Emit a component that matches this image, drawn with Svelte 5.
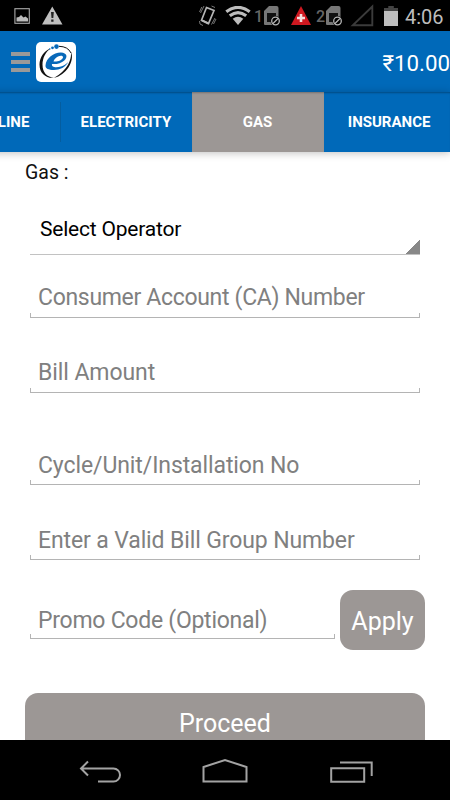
<script lang="ts">
  type Field = { id: string; hint: string; gap: number; tracking: number };

  const tabs = ["LANDLINE", "ELECTRICITY", "GAS", "INSURANCE"];

  const fields: Field[] = [
    { id: "account", hint: "Consumer Account (CA) Number", gap: 15, tracking: -0.32 },
    { id: "amount", hint: "Bill Amount", gap: 27, tracking: -0.08 },
    { id: "cycle", hint: "Cycle/Unit/Installation No", gap: 44, tracking: -0.1 },
    { id: "group", hint: "Enter a Valid Bill Group Number", gap: 27, tracking: -0.12 },
  ];

  let active = $state("GAS");
  let values: Record<string, string> = $state({
    account: "",
    amount: "",
    cycle: "",
    group: "",
  });
  let promo = $state("");
</script>

{#snippet sim(slot: string)}
  <span class="slot">{slot}</span>
  <svg class="sim" width="17" height="20" viewBox="0 0 17 20">
    <path d="M5 0h7.500q2 0 2 2v16q0 1-1 1H1q-1 0-1-1V5z" fill="#777" />
    <path d="M3 7h9v9H3z" fill="#111" />
    <circle cx="11.500" cy="15" r="5" fill="#000" />
    <circle cx="11.500" cy="15" r="3.800" fill="none" stroke="#b5b5b5" stroke-width="1.300" />
    <path d="M9 17.500l5-5" stroke="#b5b5b5" stroke-width="1.300" />
  </svg>
{/snippet}

<div class="screen">
  <div class="status">
    <svg width="70" height="31" viewBox="0 0 70 31">
      <rect x="14.900" y="8.700" width="14.400" height="14.600" fill="none" stroke="#aaa" stroke-width="1.100" />
      <path d="M16.500 21.500v-4l2.500-.5 2-2 2.500 2.500 2-1 2.500 2v3z" fill="#bbb" />
      <path d="M52.300 6.500L62.500 24.500H42z" fill="#bfbfbf" />
      <path d="M51 12h2.800l-.5 6h-1.800zM51.200 19.500h2.300v2.200h-2.300z" fill="#222" />
    </svg>
    <div class="indicators">
      <svg class="rotate" width="20" height="22" viewBox="0 0 20 22">
        <path d="M8.500 2.500l7.500 3-5.500 13-7-3.300z" fill="none" stroke="#b5b5b5" stroke-width="1.700" />
        <path d="M4.500 14.500l6.300 3-.7 2-6.500-3.300z" fill="#b5b5b5" />
        <path d="M6 1L2.500 8M3.800 2L1.500 7M17 13l-3.500 6.500M18 14l-2.500 5M1.500 16l.5 3 3 1.500M13.500 1l3.500 1.500" fill="none" stroke="#777" stroke-width="1" />
      </svg>
      <svg class="wifi" width="26" height="20" viewBox="0 0 26 20">
        <path d="M1.300 5.800Q13-3 24.700 5.800" fill="none" stroke="#bdbdbd" stroke-width="3.200" />
        <path d="M4.800 9.800Q13 3.400 21.200 9.800" fill="none" stroke="#bdbdbd" stroke-width="3.200" />
        <path d="M7.700 12.700Q13 8.700 18.300 12.700L13 19z" fill="#bdbdbd" />
      </svg>
      {@render sim("1")}
      <svg class="alert" width="22" height="20" viewBox="0 0 22 20">
        <path d="M11 0L21 19H1z" fill="#cf1820" />
        <path d="M9.700 8h2.600v2.700H15v2.600h-2.700V16H9.700v-2.700H7v-2.600h2.700z" fill="#f4dede" />
      </svg>
      {@render sim("2")}
      <svg class="signal" width="24" height="23" viewBox="0 0 24 23">
        <path d="M22.300 2.500v18.700H2.800z" fill="none" stroke="#3b3b3b" stroke-width="1.900" />
      </svg>
      <svg class="battery" width="14" height="20" viewBox="0 0 14 20">
        <path d="M4.300 0h5.500v2H14v3H0V2h4.300z" fill="#444" />
        <path d="M0 5h14v15H0z" fill="#bebebe" />
      </svg>
      <span class="clock">4:06</span>
    </div>
  </div>

  <header>
    <button class="menu" aria-label="Menu"><i></i><i></i><i></i></button>
    <svg class="logo" width="40" height="40" viewBox="0 0 40 40">
      <rect width="40" height="40" rx="5" fill="#fff" />
      <path d="M14.500 6.500C8 9 3.500 15.500 3.500 22.500c0 9 6.500 14 14.500 13.300-7-.5-11.500-5.500-11.500-13C6.500 16 9.500 10 14.500 6.500z" fill="#111" />
      <path d="M23 4.300q9 .2 12 6.700" fill="none" stroke="#111" stroke-width="1" />
      <path d="M35 10c4 9-5 23.500-17 25.800 8-4 18-13.800 17-25.800z" fill="#111" />
      <path d="M9.500 23.500C10 16 18 10.300 25 10.500c6 .3 7 4.500 3.300 8-3 2.800-8 4-12.300 3.500-1 4 5.500 3.500 9 2.500 3-.9 5-2.200 7.300-4.500-2.500 5-8.500 8-14.300 8-5.500 0-8.800-1.500-8.500-4.500zM17.500 19.500c4 .5 9-1.500 9.500-4 .3-2-2.500-2.200-5-1-2.300 1.100-4 3-4.500 5z" fill="#0869b9" />
      <circle cx="20.500" cy="4.600" r="2.300" fill="#0869b9" />
      <circle cx="16.500" cy="5.800" r="1.400" fill="#0869b9" />
      <circle cx="13.700" cy="7" r=".8" fill="#0869b9" />
    </svg>
    <span class="balance">₹10.00</span>
  </header>

  <nav class="tabs">
    {#each tabs as tab (tab)}
      <button class="tab" class:active={tab === active} onclick={() => (active = tab)}>
        {tab}
      </button>
    {/each}
  </nav>

  <main>
    <div class="title">Gas :</div>
    <button class="spinner">Select Operator</button>

    {#each fields as f (f.id)}
      <div class="field" style:margin-top="{f.gap}px" style:letter-spacing="{f.tracking}px">
        <input placeholder={f.hint} aria-label={f.hint} bind:value={values[f.id]} />
      </div>
    {/each}

    <div class="promo">
      <div class="field">
        <input placeholder="Promo Code (Optional)" aria-label="Promo code" bind:value={promo} />
      </div>
      <button class="apply">Apply</button>
    </div>
    <button class="proceed">Proceed</button>
  </main>

  <footer>
    <svg width="450" height="60" viewBox="0 0 450 60" fill="none" stroke="#a3a3a3" stroke-width="2">
      <path d="M80.500 28.500h33a6.500 6.500 0 0 1 0 13H98M88 21.500l-7 7 7 7" />
      <path d="M203.500 41.500V27L225 20l21.500 7v14.500z" />
      <path d="M331.200 28.200h33v13.600h-33zM340 22.500h31.700V36" />
    </svg>
  </footer>
</div>

<style>
  :global(body) {
    margin: 0;
    background: #000;
  }
  .screen {
    display: flex;
    flex-direction: column;
    width: 450px;
    height: 800px;
    overflow: hidden;
    background: #fff;
    font-family: Roboto, "Noto Sans", sans-serif;
  }
  button,
  input {
    border: 0;
    padding: 0;
    margin: 0;
    background: none;
    font-family: inherit;
  }
  svg {
    display: block;
    flex: none;
  }
  .status {
    display: flex;
    flex: none;
    height: 31px;
    background: #000;
  }
  .indicators {
    display: flex;
    align-items: center;
    margin-left: 128px;
  }
  .wifi {
    margin-left: 7px;
  }
  .slot {
    width: 9px;
    margin: 3px 0 0 3px;
    color: #666;
    font-size: 16px;
    font-weight: 500;
    line-height: 20px;
  }
  .sim {
    margin-left: 1px;
  }
  .alert {
    margin-left: 9px;
  }
  .alert + .slot {
    margin-left: 4px;
  }
  .signal {
    margin-left: 7px;
  }
  .battery {
    margin-left: 10px;
  }
  .clock {
    margin: 2px 0 0 7px;
    color: #bdbdbd;
    font-size: 20px;
    line-height: 28px;
  }
  header {
    display: flex;
    align-items: center;
    flex: none;
    height: 61px;
    background: #0069b9;
  }
  .menu {
    display: flex;
    flex-direction: column;
    gap: 4px;
    width: 19px;
    margin-left: 11px;
  }
  .menu i {
    height: 4px;
    background: #999;
  }
  .logo {
    margin-left: 6px;
  }
  .balance {
    margin: 2px 0 0 auto;
    color: #fff;
    font-size: 22.300px;
  }
  .tabs {
    display: flex;
    flex: none;
    height: 60px;
    margin-left: -71px;
    background: #0069b9;
    box-shadow: 0 1px 8px rgba(0, 0, 0, 0.25), inset 0 2px 2px -1px rgba(0, 0, 0, 0.3);
  }
  .tab {
    flex: none;
    width: 131.600px;
    color: #fff;
    font-size: 15px;
    font-weight: 700;
    text-indent: -1px;
    background: linear-gradient(#045d9f, #045d9f) right / 1px 40px no-repeat;
  }
  .tab:nth-child(n + 2) {
    background: none;
  }
  .tab.active {
    background: #9c9795;
    box-shadow: inset 0 2px 2px -1px rgba(0, 0, 0, 0.25);
  }
  main {
    display: flex;
    flex-direction: column;
    flex: 1;
    min-height: 0;
    padding: 0 30px;
    overflow: hidden;
  }
  .title {
    flex: none;
    height: 53px;
    margin-left: -5px;
    padding-top: 8px;
    box-sizing: border-box;
    font-size: 19.500px;
    line-height: 26px;
    color: #111;
  }
  .spinner {
    flex: none;
    height: 50px;
    padding: 0 10px 2px;
    border-bottom: 1px solid #c2c2c2;
    color: #000;
    font-size: 21px;
    letter-spacing: -0.2px;
    text-align: left;
    background: linear-gradient(135deg, transparent 50%, #888 50%) right bottom / 15px 15px no-repeat;
  }
  /* underline with short upturned ends */
  .field {
    flex: none;
    height: 48px;
    box-sizing: border-box;
    border-bottom: 1px solid #b4b4b4;
    background:
      linear-gradient(#b4b4b4, #b4b4b4) left bottom / 1px 4px no-repeat,
      linear-gradient(#b4b4b4, #b4b4b4) right bottom / 1px 4px no-repeat;
  }
  input {
    display: block;
    width: 100%;
    height: 100%;
    box-sizing: border-box;
    padding: 8px 8px 0;
    outline: 0;
    color: #222;
    font-size: 23px;
    letter-spacing: inherit;
  }
  .field:nth-of-type(n + 4) input {
    padding-top: 9px;
  }
  input::placeholder {
    color: #808080;
    opacity: 1;
  }
  .promo {
    display: flex;
    flex: none;
    gap: 5px;
    height: 60px;
    margin: 30px -5px 0 0;
  }
  .promo .field {
    flex: 1;
    height: 49px;
    letter-spacing: -0.26px;
  }
  .promo input {
    padding-top: 13px;
  }
  .apply,
  .proceed {
    flex: none;
    border-radius: 13px;
    background: #9c9795;
    color: #fff;
    font-size: 25px;
  }
  .apply {
    width: 85px;
    padding-top: 2px;
  }
  .proceed {
    height: 60px;
    margin: 43px -5px 0;
  }
  footer {
    flex: none;
    height: 60px;
    background: #000;
  }
</style>
